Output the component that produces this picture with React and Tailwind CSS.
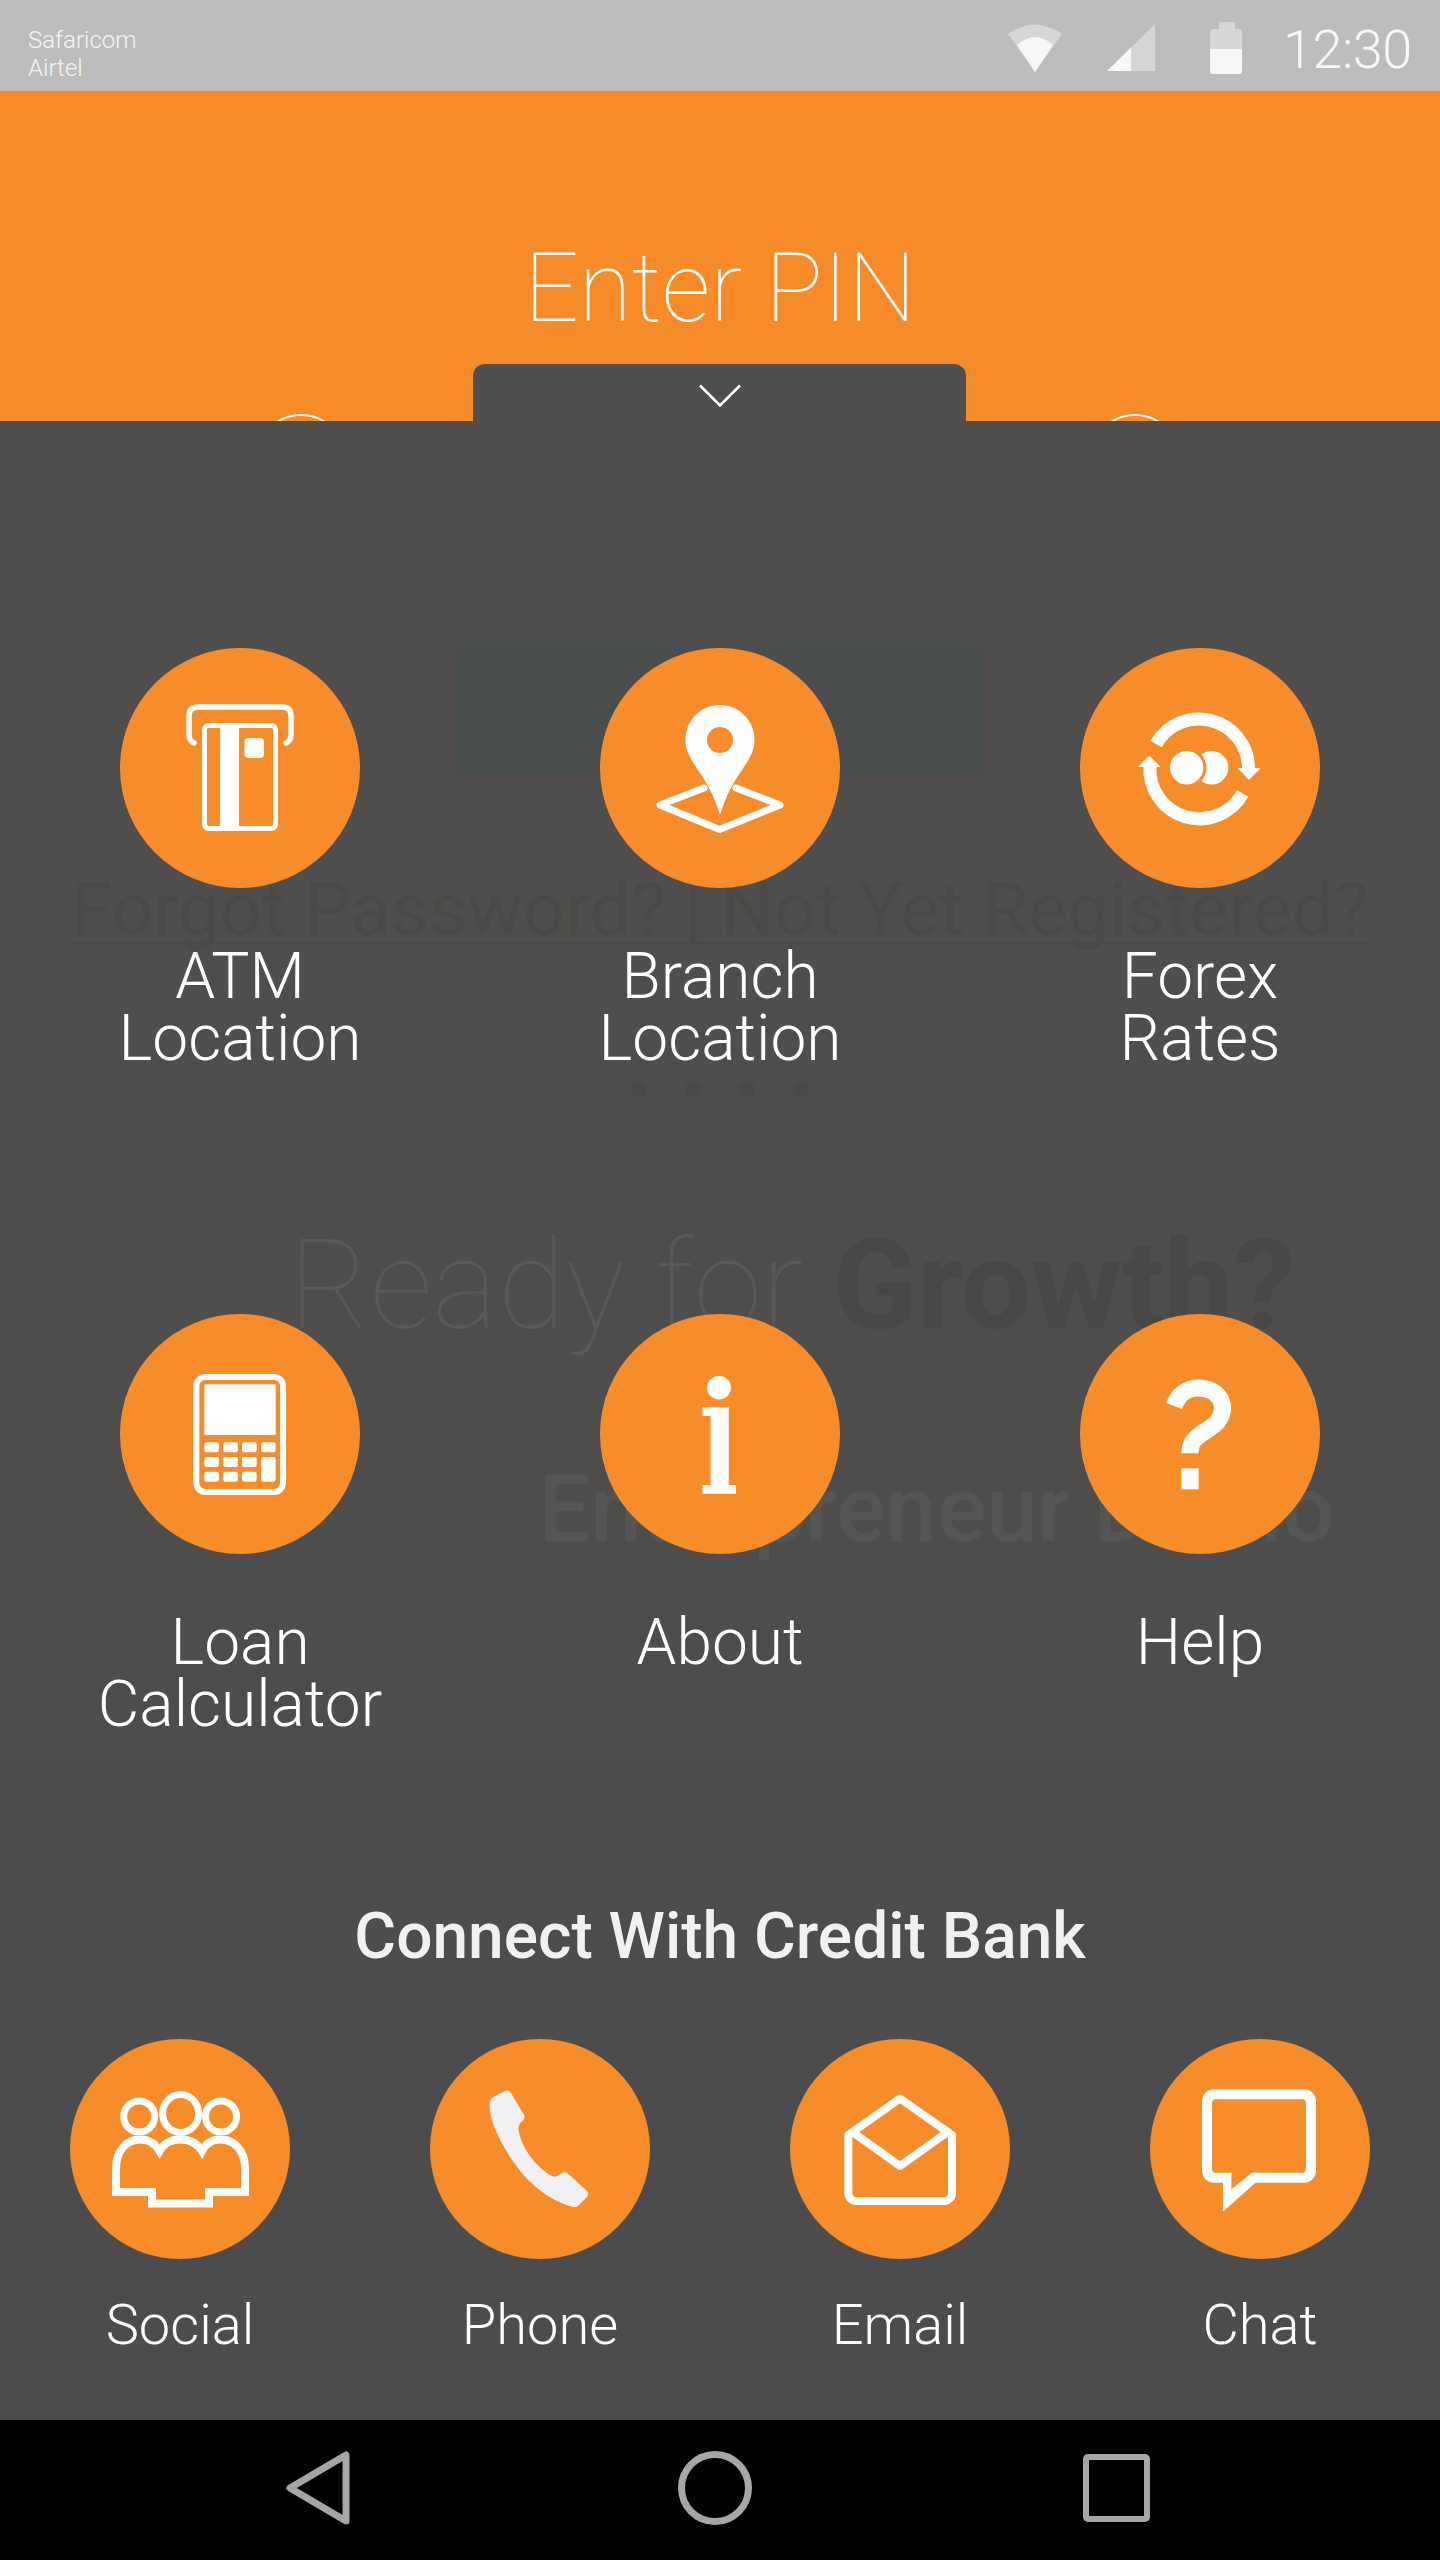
const Disc = ({ big = true, children }) => (
  <div className={`${big ? "h-[240px] w-[240px]" : "h-[220px] w-[220px]"} shrink-0 rounded-full bg-[#f78c2a]`}>
    <svg viewBox={big ? "0 0 240 240" : "0 0 220 220"} className="h-full w-full" fill="none">
      {children}
    </svg>
  </div>
);

const AtmIcon = () => (
  <g stroke="#fff">
    <path d="M74 95 C70 93 69 90 69 87 V68 Q69 59 78 59 H162 Q171 59 171 68 V87 C171 90 170 93 166 95" strokeWidth="5.5" strokeLinecap="round" />
    <rect x="84.5" y="77.5" width="71" height="103" rx="4" strokeWidth="5" />
    <rect x="100" y="76" width="19" height="106" fill="#fff" stroke="none" />
    <rect x="124.5" y="90" width="19.5" height="20" rx="4" fill="#fff" stroke="none" />
  </g>
);

const BranchIcon = () => (
  <g>
    <path d="M104 140 L60 157 L119.5 181.5 L180 157 L136 140" stroke="#fff" strokeWidth="7" strokeLinejoin="round" strokeLinecap="round" />
    <path fillRule="evenodd" fill="#fff" d="M120 57 C139.5 57 154.5 72.5 154.5 92 C154.5 105 147 114 140 125 C134 134 126.5 146 120 167 C113.5 146 106 134 100 125 C93 114 85.5 105 85.5 92 C85.5 72.5 100.5 57 120 57 Z M120 79 A13 13 0 1 0 120 105 A13 13 0 1 0 120 79 Z" />
  </g>
);

const ForexIcon = () => (
  <g>
    <path d="M76 96 A49.5 49.5 0 0 1 168.5 121" stroke="#fff" strokeWidth="13" />
    <path d="M162.7 145.3 A49.5 49.5 0 0 1 70 118" stroke="#fff" strokeWidth="13" />
    <path d="M157.7 120.3 H180.7 L169 132 Z M57.7 119 H80.7 L69.3 107.7 Z" fill="#fff" />
    <circle cx="131.7" cy="119.7" r="16.7" fill="#fff" />
    <circle cx="106.7" cy="119.7" r="19.7" fill="#f78c2a" />
    <circle cx="106.7" cy="119.7" r="16.7" fill="#fff" />
  </g>
);

const CalculatorIcon = () => {
  const cols = [84.3, 103.3, 122, 141];
  const rows = [128.3, 143, 157.7];
  return (
    <g fill="#fff">
      <rect x="76.3" y="63" width="86.7" height="115" rx="9" stroke="#fff" strokeWidth="6" fill="none" />
      <rect x="84.3" y="70.3" width="71.4" height="50.7" />
      {rows.map((y, r) =>
        cols.map((x, c) =>
          c === 3 && r > 0 ? null : <rect key={`${r}-${c}`} x={x} y={y} width="14.6" height="10" rx="2" />
        )
      )}
      <rect x="141" y="143" width="14.6" height="24.7" rx="2" />
    </g>
  );
};

const AboutIcon = () => (
  <g fill="#fff">
    <ellipse cx="119" cy="73.7" rx="12" ry="11.7" />
    <path d="M102.4 93.3 H128.8 V171 H136 V179.7 H102.4 V171 H110.6 V102 H102.4 Z" />
  </g>
);

const HelpIcon = () => (
  <g>
    <path d="M94 92 C98 81 106 74 118 74 C132 74 142.5 82 142.5 94 C142.5 108 131 113 121 120 C113 126 110 130 110 139.3" stroke="#fff" strokeWidth="17" />
    <rect x="101.4" y="154.3" width="17.2" height="21" fill="#fff" />
  </g>
);

const SocialIcon = () => (
  <g stroke="#fff">
    <circle cx="69.2" cy="77.5" r="15.5" strokeWidth="7" />
    <ellipse cx="110.6" cy="74.5" rx="18" ry="19" strokeWidth="7" />
    <circle cx="151" cy="77.5" r="15.5" strokeWidth="7" />
    <path d="M46 153 V130 C46 112 56 100.5 70 100.5 C78 100.5 85 104 89.5 112 C94 104 101 100.5 110.5 100.5 C120 100.5 127 104 132 112 C136 104 142 100.5 150 100.5 C165 100.5 175 112 175 130 V153 H139 V164.5 H82 V153 Z" strokeWidth="8" />
  </g>
);

const PhoneIcon = () => (
  <path
    fill="#f1f1f3"
    d="M63 58 L75 52 Q79 50.5 81 54 L94 76 Q95.5 79 93 81.5 L90.5 84 Q87.5 87 88.5 91 C92 110 106 128 122 137 Q125 138.5 128 136.5 L132 134 Q135.5 132 138.5 135 L157 152 Q159 155 157 158 L149 166 Q146 169 142.5 168 C118 161 96 143 80 118 C67 97 60 81 59.5 67 Q59.5 60 63 58 Z"
  />
);

const EmailIcon = () => (
  <g stroke="#fff" strokeWidth="8" strokeLinejoin="round">
    <path d="M58.3 96 L110 59.5 L162 96 V154 A8 8 0 0 1 154 162 H66.3 A8 8 0 0 1 58.3 154 Z" />
    <path d="M61 92 L110 127 L159 92" />
  </g>
);

const ChatIcon = () => (
  <path
    fill="#fff"
    fillRule="evenodd"
    d="M64 50.3 H154 A12 12 0 0 1 166 62.3 V131.7 A12 12 0 0 1 154 143.7 H105.5 L72.9 172.7 V143.7 H64 A12 12 0 0 1 52 131.7 V62.3 A12 12 0 0 1 64 50.3 Z M66 60.3 A4 4 0 0 0 62 64.3 V129.7 A4 4 0 0 0 66 133.7 H81.4 V150.3 L101.9 133.7 H152 A4 4 0 0 0 156 129.7 V64.3 A4 4 0 0 0 152 60.3 Z"
  />
);

const services = [
  { lines: ["ATM", "Location"], icon: <AtmIcon /> },
  { lines: ["Branch", "Location"], icon: <BranchIcon /> },
  { lines: ["Forex", "Rates"], icon: <ForexIcon /> },
];
const tools = [
  { lines: ["Loan", "Calculator"], icon: <CalculatorIcon /> },
  { lines: ["About"], icon: <AboutIcon /> },
  { lines: ["Help"], icon: <HelpIcon /> },
];
const contacts = [
  { label: "Social", icon: <SocialIcon /> },
  { label: "Phone", icon: <PhoneIcon /> },
  { label: "Email", icon: <EmailIcon /> },
  { label: "Chat", icon: <ChatIcon /> },
];

const ServiceTile = ({ lines, icon }) => (
  <div className="flex flex-col items-center">
    <Disc>{icon}</Disc>
    <div className="mt-[58px] text-center text-[64px] leading-[62px] font-light text-white">
      {lines.map((l) => (
        <div key={l}>{l}</div>
      ))}
    </div>
  </div>
);

const StatusBar = () => (
  <header className="flex h-[91px] shrink-0 items-center justify-between bg-[#bdbdbd] pr-[32px] pl-[28px] text-white">
    <div className="pt-[16px] text-[24px] leading-[28px] font-light text-[#f5f5f5]">
      <div>Safaricom</div>
      <div>Airtel</div>
    </div>
    <div className="flex items-center pt-[4px]">
      <svg width="56" height="50" viewBox="0 0 56 50">
        <path d="M28 49 L1 11 Q28 -8 55 11 Z" fill="#d6d6d6" />
        <path d="M28 49 L10 22 Q28 6 46 22 Z" fill="#f7f7f7" />
      </svg>
      <svg width="48" height="48" viewBox="0 0 48 48" className="ml-[44px]">
        <path d="M0 47 H48 V0 Z" fill="#d6d6d6" />
        <path d="M0 47 H24 V23.5 Z" fill="#f7f7f7" />
      </svg>
      <svg width="32" height="52" viewBox="0 0 32 52" className="ml-[55px]">
        <path d="M9 0 H25 V7 H29 Q32 7 32 10 V27 H0 V10 Q0 7 3 7 H9 Z" fill="#d6d6d6" />
        <path d="M0 27 H32 V49 Q32 52 29 52 H3 Q0 52 0 49 Z" fill="#f7f7f7" />
      </svg>
      <span className="mt-[4px] ml-[41px] w-[125px] text-[54px] leading-none font-light tracking-[-0.5px] whitespace-nowrap text-[#f7f7f7]">12:30</span>
    </div>
  </header>
);

const PinSlots = ({ tone }) => (
  <div className="flex h-[90px] w-full">
    <div className="ml-[256px] flex gap-[188px]">
      {[0, 1, 2, 3].map((i) => (
        <div key={i} className={`h-[90px] w-[90px] rounded-full border-2 ${tone}`} />
      ))}
    </div>
  </div>
);

// Login form that stays dimly visible under the shortcuts sheet.
const DimmedForm = () => (
  <div className="pointer-events-none absolute inset-0 flex flex-col items-center overflow-hidden">
    <div className="-mt-[7px] w-full">
      <PinSlots tone="border-[#525150]" />
    </div>
    <div className="mt-[139px] h-[134px] w-[530px] bg-[#4b4e4f]" />
    <div className="mt-[101px] border-b-2 border-[#4b4a48] text-[74px] leading-[64px] whitespace-nowrap text-[#4b4a48]">
      Forgot Password? | Not Yet Registered?
    </div>
    <div className="mt-[137px] flex gap-[38px]">
      {[0, 1, 2, 3].map((i) => (
        <div key={i} className="h-[16px] w-[16px] rounded-full bg-[#4b4a48]" />
      ))}
    </div>
    <div className="mt-[129px] ml-[144px] text-[124px] leading-[120px] whitespace-nowrap">
      <span className="font-thin text-[#5a5957]">Ready for </span>
      <span className="font-bold text-[#484847]">Growth?</span>
    </div>
    <div className="mt-[114px] ml-[433px] text-[92px] leading-[100px] font-medium whitespace-nowrap text-[#555554]">
      Entrepreneur Demo
    </div>
  </div>
);

export default function App() {
  return (
    <div className="flex h-[2560px] w-[1440px] flex-col overflow-hidden font-[Roboto,sans-serif]">
      <StatusBar />

      <section className="relative flex h-[330px] shrink-0 justify-center overflow-hidden bg-[#f68b29]">
        <h1 className="mt-[147px] text-[96px] leading-[100px] font-thin text-white">Enter PIN</h1>
        <div className="absolute top-[323px] left-0 w-full">
          <PinSlots tone="border-white" />
        </div>
      </section>

      <main className="relative flex-1 bg-gradient-to-b from-[#504f4d] to-[#4c4c4c]">
        <DimmedForm />

        <div className="absolute bottom-full left-[473px] flex h-[57px] w-[493px] justify-center rounded-t-[12px] bg-[#504f4d] pt-[20px]">
          <svg width="44" height="24" viewBox="0 0 44 24" fill="none">
            <path d="M2 1.5 L22 21.5 L42 1.5" stroke="#fff" strokeWidth="2.5" />
          </svg>
        </div>

        <div className="relative flex h-full flex-col">
          <div className="mt-[227px] grid h-[666px] grid-cols-3">
            {services.map((s) => (
              <ServiceTile key={s.lines.join()} {...s} />
            ))}
          </div>
          <div className="grid h-[588px] grid-cols-3">
            {tools.map((s) => (
              <ServiceTile key={s.lines.join()} {...s} />
            ))}
          </div>

          <h2 className="text-center text-[64px] leading-[70px] font-medium text-[#f1f1f1]">Connect With Credit Bank</h2>

          <div className="mt-[67px] grid grid-cols-4">
            {contacts.map((c) => (
              <div key={c.label} className="flex flex-col items-center">
                <Disc big={false}>{c.icon}</Disc>
                <div className="mt-[31px] text-[56px] leading-[70px] font-light text-white">{c.label}</div>
              </div>
            ))}
          </div>
        </div>
      </main>

      <nav className="flex h-[140px] shrink-0 items-center bg-black pb-1 pl-[286px]">
        <svg width="64" height="74" viewBox="0 0 64 74" fill="none">
          <path d="M60 4 V70 L4 37 Z" stroke="#a6a6a6" strokeWidth="7" strokeLinejoin="round" />
        </svg>
        <svg width="74" height="74" viewBox="0 0 74 74" fill="none" className="ml-[328px]">
          <circle cx="37" cy="37" r="33.5" stroke="#a6a6a6" strokeWidth="7" />
        </svg>
        <div className="ml-[331px] h-[68px] w-[67px] rounded-[5px] border-[6px] border-[#a6a6a6]" />
      </nav>
    </div>
  );
}
